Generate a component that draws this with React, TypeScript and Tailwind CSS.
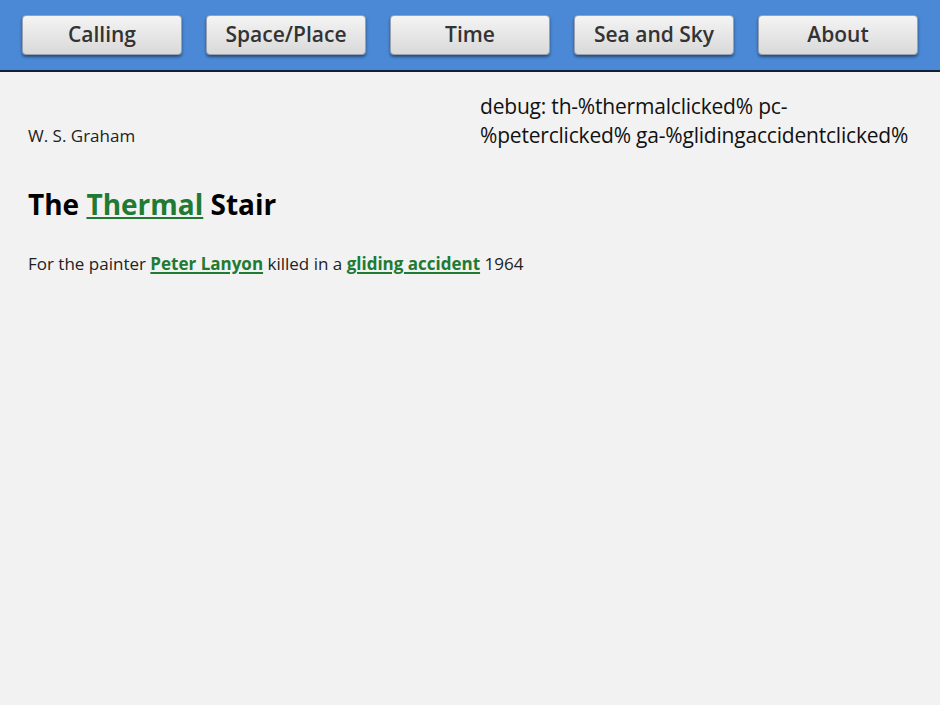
const navItems = ['Calling', 'Space/Place', 'Time', 'Sea and Sky', 'About']

function NavButton({ label }: { label: string }) {
  return (
    <button
      type="button"
      className="h-10 w-[160px] rounded-[4px] border border-[#9aa3ad] bg-gradient-to-b from-[#f4f4f4] to-[#d9d9d9] text-[21px] font-semibold text-[#333] shadow-[0_2px_3px_rgba(0,0,0,0.45)]"
    >
      {label}
    </button>
  )
}

function GreenLink({ children }: { children: React.ReactNode }) {
  return <a className="font-bold text-[#217a33] underline decoration-[1.5px] underline-offset-[2px]">{children}</a>
}

export default function App() {
  return (
    <div className="flex min-h-[705px] flex-col bg-[#f2f2f2] font-['Open_Sans',sans-serif]">
      <header className="flex h-[72px] gap-6 border-b-2 border-[#10203a] bg-[#4b89d6] pl-[22px] pt-[15px]">
        {navItems.map((item) => (
          <NavButton key={item} label={item} />
        ))}
      </header>

      <main className="pl-7 pt-[20px]">
        <div className="flex items-end">
          <p className="w-[452px] shrink-0 pb-[2px] text-[17px] text-[#222]">W. S. Graham</p>
          <p className="w-[456px] shrink-0 text-[21px] leading-[29px] tracking-[-0.2px] text-[#111]">
            debug: th-%thermalclicked% pc-%peterclicked% ga-%glidingaccidentclicked%
          </p>
        </div>

        <h1 className="mt-[36px] text-[28px] font-bold leading-[36px] text-black">
          The <GreenLink>Thermal</GreenLink> Stair
        </h1>

        <p className="mt-[29px] text-[17px] text-[#222]">
          For the painter <GreenLink>Peter Lanyon</GreenLink> killed in a <GreenLink>gliding accident</GreenLink> 1964
        </p>
      </main>
    </div>
  )
}
